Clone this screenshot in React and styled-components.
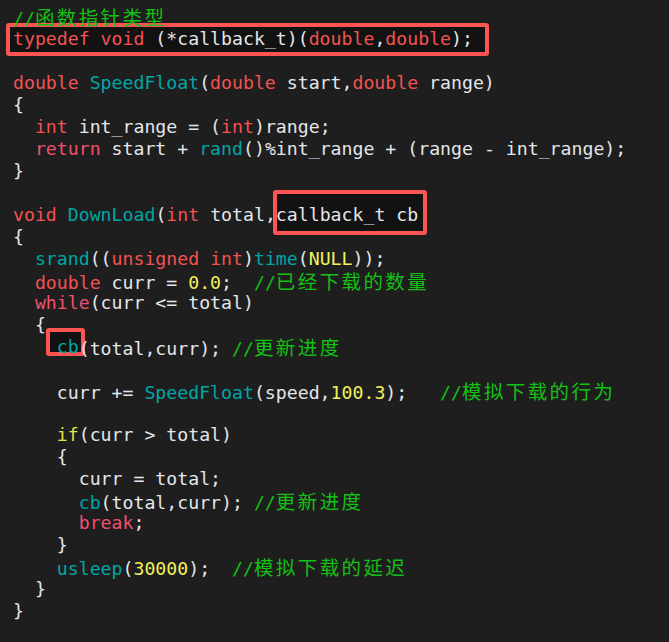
import styled, { createGlobalStyle } from "styled-components";

const GlobalStyle = createGlobalStyle`
  html, body {
    margin: 0;
    padding: 0;
    background: #1e1e1e;
  }
`;

const Editor = styled.div`
  position: relative;
  z-index: 0;
  width: 669px;
  height: 642px;
  overflow: hidden;
  box-sizing: border-box;
  padding: 6px 0 0 13px;
  background: #1e1e1e;
  color: #e4e6ea;
  font-family: "DejaVu Sans Mono", "Liberation Mono", monospace;
  font-size: 18.2px;
`;

const Line = styled.div`
  height: 22px;
  line-height: 22px;
  white-space: pre;
`;

const Kw = styled.span`
  color: #f25252;
`;
const Flow = styled.span`
  color: #f0506e;
`;
const Cond = styled.span`
  color: #e2e24a;
`;
const Fn = styled.span`
  color: #00a6a6;
`;
const Num = styled.span`
  color: #f2f25a;
`;
const Comment = styled.span`
  color: #14c014;
`;
const Han = styled.span`
  font-family: "Noto Sans CJK SC", sans-serif;
  font-size: 19.5px;
  letter-spacing: 2.4px;
  line-height: 22px;
`;

const Mark = styled.span`
  position: relative;
  display: inline-block;
  height: 22px;
  vertical-align: top;
  &::after {
    content: "";
    position: absolute;
    z-index: -1;
    top: ${(p) => p.$t}px;
    left: ${(p) => p.$l}px;
    right: ${(p) => p.$r}px;
    bottom: ${(p) => p.$b}px;
    border: 4.5px solid #ff5454;
    border-radius: 3px;
    background: #121212;
  }
`;

const Note = ({ text }) => (
  <Comment>
    //<Han>{text}</Han>
  </Comment>
);

export default function App() {
  return (
    <>
      <GlobalStyle />
      <Editor>
        <Line>
          <Note text="函数指针类型" />
        </Line>
        <Line>
          <Mark $t={-5} $l={-7} $r={-16} $b={-6}>
            <Kw>typedef</Kw> <Kw>void</Kw> (*callback_t)(<Kw>double</Kw>,
            <Kw>double</Kw>);
          </Mark>
        </Line>
        <Line> </Line>
        <Line>
          <Kw>double</Kw> <Fn>SpeedFloat</Fn>(<Kw>double</Kw> start,
          <Kw>double</Kw> range)
        </Line>
        <Line>{"{"}</Line>
        <Line>
          {"  "}
          <Kw>int</Kw> int_range = (<Kw>int</Kw>)range;
        </Line>
        <Line>
          {"  "}
          <Flow>return</Flow> start + <Fn>rand</Fn>()%int_range + (range - int_range);
        </Line>
        <Line>{"}"}</Line>
        <Line> </Line>
        <Line>
          <Kw>void</Kw> <Fn>DownLoad</Fn>(<Kw>int</Kw> total,
          <Mark $t={-14} $l={-3} $r={-9} $b={-9}>
            callback_t cb
          </Mark>
        </Line>
        <Line>{"{"}</Line>
        <Line>
          {"  "}
          <Fn>srand</Fn>((<Kw>unsigned</Kw> <Kw>int</Kw>)<Fn>time</Fn>(<Num>NULL</Num>));
        </Line>
        <Line>
          {"  "}
          <Kw>double</Kw> curr = <Num>0.0</Num>;{"  "}
          <Note text="已经下载的数量" />
        </Line>
        <Line>
          {"  "}
          <Flow>while</Flow>(curr &lt;= total)
        </Line>
        <Line>{"  {"}</Line>
        <Line>
          {"    "}
          <Mark $t={-8} $l={-11} $r={-6} $b={2}>
            <Fn>cb</Fn>
          </Mark>
          (total,curr); <Note text="更新进度" />
        </Line>
        <Line> </Line>
        <Line>
          {"    "}curr += <Fn>SpeedFloat</Fn>(speed,<Num>100.3</Num>);{"   "}
          <Note text="模拟下载的行为" />
        </Line>
        <Line> </Line>
        <Line>
          {"    "}
          <Cond>if</Cond>(curr &gt; total)
        </Line>
        <Line>{"    {"}</Line>
        <Line>{"      curr = total;"}</Line>
        <Line>
          {"      "}
          <Fn>cb</Fn>(total,curr); <Note text="更新进度" />
        </Line>
        <Line>
          {"      "}
          <Flow>break</Flow>;
        </Line>
        <Line>{"    }"}</Line>
        <Line>
          {"    "}
          <Fn>usleep</Fn>(<Num>30000</Num>);{"  "}
          <Note text="模拟下载的延迟" />
        </Line>
        <Line>{"  }"}</Line>
        <Line>{"}"}</Line>
      </Editor>
    </>
  );
}
